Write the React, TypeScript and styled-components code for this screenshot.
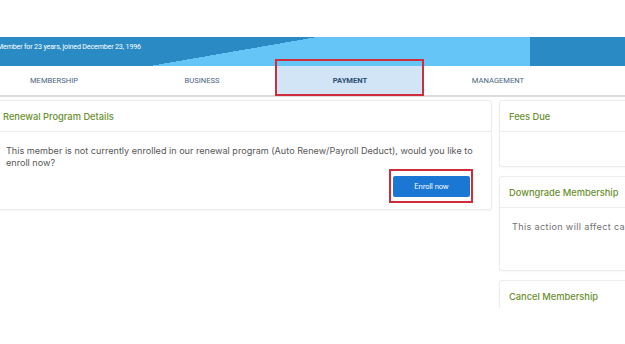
import React from 'react'
import styled, { createGlobalStyle } from 'styled-components'

const GlobalStyle = createGlobalStyle`
  html, body {
    margin: 0;
    padding: 0;
    background: #ffffff;
  }
  body {
    font-family: Inter, "Liberation Sans", Arial, sans-serif;
  }
`

const DARK_BLUE = '#2a8bc4'
const LIGHT_BLUE = '#64c5f6'
const GREEN = '#6b8f2f'

const Page = styled.div`
  width: 625px;
  height: 308px;
  overflow: hidden;
  background: #ffffff;
  padding-top: 37px;
  box-sizing: border-box;
`

const Banner = styled.div`
  height: 29px;
  display: flex;
  align-items: flex-start;
  background:
    linear-gradient(${DARK_BLUE}, ${DARK_BLUE}) 0 0 / 150px 100% no-repeat,
    linear-gradient(to bottom right, ${DARK_BLUE} 50%, transparent 50%) 150px 0 / 167px 100% no-repeat,
    linear-gradient(${DARK_BLUE}, ${DARK_BLUE}) 530px 0 / 95px 100% no-repeat,
    ${LIGHT_BLUE};
`

const MemberSince = styled.span`
  font-family: Roboto, "Liberation Sans", sans-serif;
  font-size: 7.1px;
  letter-spacing: -0.15px;
  color: #ffffff;
  margin: 5px 0 0 -3px;
`

const TabBar = styled.div`
  display: flex;
  height: 29px;
  border-bottom: 2px solid #dcdcdc;
  margin-left: -20px;
`

const Tab = styled.div<{ $active?: boolean }>`
  position: relative;
  width: 148px;
  flex: 0 0 148px;
  display: flex;
  align-items: center;
  justify-content: center;
  font-family: Roboto, "Liberation Sans", sans-serif;
  font-size: 7.6px;
  color: ${p => (p.$active ? '#2c4d74' : '#4c6580')};
  font-weight: ${p => (p.$active ? 700 : 400)};
  background: ${p => (p.$active ? '#d2e5f6' : 'transparent')};
`

const Highlight = styled.span<{ $t: number; $r: number; $b: number; $l: number }>`
  position: absolute;
  top: ${p => p.$t}px;
  right: ${p => p.$r}px;
  bottom: ${p => p.$b}px;
  left: ${p => p.$l}px;
  border: 2px solid #d12c3c;
  pointer-events: none;
`

const Content = styled.div`
  display: flex;
  align-items: flex-start;
  gap: 7px;
  padding-top: 3px;
  margin-left: -7px;
`

const Column = styled.div<{ $width: number; $gap: number }>`
  flex: 0 0 ${p => p.$width}px;
  width: ${p => p.$width}px;
  display: flex;
  flex-direction: column;
  gap: ${p => p.$gap}px;
`

const Card = styled.div`
  background: #ffffff;
  border: 1px solid #ececec;
  border-radius: 3px;
  box-shadow: 0 1px 2px rgba(0, 0, 0, 0.04);
`

const CardHeader = styled.div`
  height: 30px;
  display: flex;
  align-items: center;
  padding-left: 9px;
  border-bottom: 1px solid #ececec;
  font-size: 9.3px;
  font-weight: 500;
  color: ${GREEN};
  white-space: nowrap;
`

const CardBody = styled.div<{ $height?: number; $muted?: boolean }>`
  padding: 13px 12px 12px 12px;
  min-height: ${p => (p.$height ? `${p.$height}px` : 'auto')};
  box-sizing: border-box;
  font-size: 9.1px;
  line-height: 12px;
  color: ${p => (p.$muted ? '#727272' : '#585858')};
  letter-spacing: ${p => (p.$muted ? '0.35px' : '0')};
  white-space: ${p => (p.$height ? 'nowrap' : 'normal')};
`

const Message = styled.p`
  margin: 0;
  padding-right: 4px;
`

const Actions = styled.div`
  display: flex;
  justify-content: flex-end;
  margin-top: 7px;
  padding-right: 9px;
`

const ButtonWrap = styled.span`
  position: relative;
  display: inline-flex;
`

const PrimaryButton = styled.button`
  width: 77px;
  height: 21px;
  border: none;
  border-radius: 2px;
  background: #1b77d4;
  color: #ffffff;
  font-family: Inter, "Liberation Sans", sans-serif;
  font-size: 7.2px;
  letter-spacing: -0.1px;
  cursor: pointer;
`

const tabs = ['MEMBERSHIP', 'BUSINESS', 'PAYMENT', 'MANAGEMENT']

export default function App() {
  return (
    <>
      <GlobalStyle />
      <Page>
        <Banner>
          <MemberSince>Member for 23 years, joined December 23, 1996</MemberSince>
        </Banner>
        <TabBar>
          {tabs.map(t => (
            <Tab key={t} $active={t === 'PAYMENT'}>
              {t}
              {t === 'PAYMENT' && <Highlight $t={-7} $r={0} $b={-1} $l={-1} />}
            </Tab>
          ))}
        </TabBar>
        <Content>
          <Column $width={499} $gap={10}>
            <Card>
              <CardHeader>Renewal Program Details</CardHeader>
              <CardBody>
                <Message>
                  This member is not currently enrolled in our renewal program (Auto Renew/Payroll
                  Deduct), would you like to enroll now?
                </Message>
                <Actions>
                  <ButtonWrap>
                    <PrimaryButton>Enroll now</PrimaryButton>
                    <Highlight $t={-7} $r={-3} $b={-6} $l={-4} />
                  </ButtonWrap>
                </Actions>
              </CardBody>
            </Card>
          </Column>
          <Column $width={160} $gap={9}>
            <Card>
              <CardHeader>Fees Due</CardHeader>
              <CardBody $height={34} />
            </Card>
            <Card>
              <CardHeader>Downgrade Membership</CardHeader>
              <CardBody $height={62} $muted>This action will affect cash flow</CardBody>
            </Card>
            <Card>
              <CardHeader>Cancel Membership</CardHeader>
              <CardBody $height={40} />
            </Card>
          </Column>
        </Content>
      </Page>
    </>
  )
}
